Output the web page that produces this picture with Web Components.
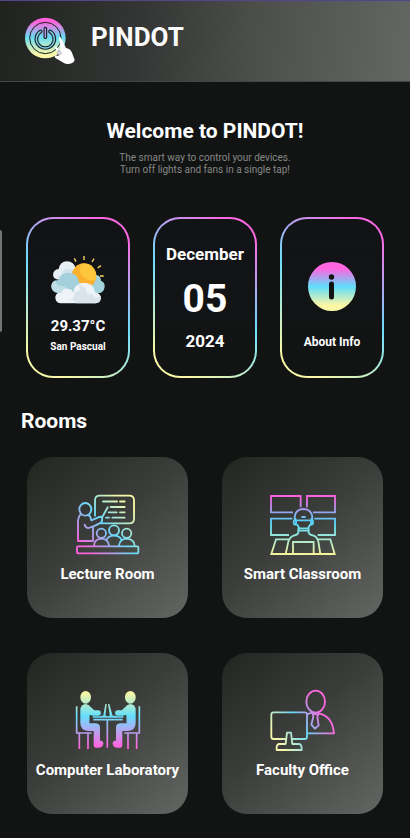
<!DOCTYPE html>
<html lang="en">
<head>
<meta charset="utf-8">
<meta name="viewport" content="width=device-width, initial-scale=1">
<title>PINDOT</title>
<style>
html { background: #121413; }
body { margin: 0; font-family: Roboto, "Liberation Sans", sans-serif; color: #fff; }
</style>
</head>
<body>
<pindot-app></pindot-app>

<template id="t-app">
<style>
:host { display: block; position: relative; min-height: 100vh; background: #121413; }
main { display: block; padding-bottom: 24px; }
.intro { text-align: center; padding: 37px 24px 0; }
h1 { margin: 0; font-size: 21px; line-height: 24px; font-weight: 700; }
.intro p { margin: 9px 0 0; font-size: 10px; line-height: 12px; color: #858786; }
.status { display: grid; grid-template-columns: repeat(3, 1fr); gap: 23px; padding: 41px 26px 0; }
h2 { margin: 31px 21px 0; font-size: 21px; line-height: 24px; font-weight: 700; }
.rooms { display: grid; grid-template-columns: repeat(2, 1fr); gap: 35px 34px; padding: 24px 27px 0; }
.thumb { position: absolute; left: 0; top: 230px; width: 2px; height: 102px; border-radius: 0 2px 2px 0; background: #747675; }
.weather { width: 56px; height: 50px; margin: 0 0 11px; }
.temp { font-size: 15px; line-height: 20px; }
.place { font-size: 10px; line-height: 14px; margin-top: 4px; }
.month, .year { font-size: 17px; line-height: 20px; }
.day { font-size: 39px; line-height: 44px; margin: 13px 0 10px; }
.info { width: 48px; height: 49px; margin-bottom: 23px; }
.about { font-size: 12px; line-height: 16px; }
.stack { display: flex; flex-direction: column; align-items: center; }
.w { padding-top: 13px; }
.i { padding-top: 16px; }
</style>
<app-header></app-header>
<main>
  <section class="intro">
    <h1>Welcome to PINDOT!</h1>
    <p>The smart way to control your devices.<br>Turn off lights and fans in a single tap!</p>
  </section>
  <section class="status">
    <status-card>
      <div class="stack w">
      <svg class="weather" viewBox="149 148 168 150" aria-hidden="true">
        <path d="M222 158l5 10M251 151v12M281 159l-6 10M302 180l-10 7M310 211h-11" stroke="#f9d866" stroke-width="4"/>
        <path d="M287 207q14 2 15 18 12 5 11 18-2 19-22 20h-40v-40z" fill="#a4d2dc"/>
        <path d="M176 222q-17-1-18-15 1-15 17-17 4-22 25-23 21 1 27 22l-6 35z" fill="#e6eff4"/>
        <path d="M188 222q-14-2-17-13 4 4 12 2 0-16 15-20 18-4 25 8l-8 22z" fill="#d2e2ea"/>
        <circle cx="251" cy="210" r="37" fill="#fbb02e"/>
        <path d="M243 174q35-5 44 29 2 14-4 22-32 0-42-23-5-16 2-28z" fill="#fdc63c"/>
        <path d="M174 263q-21-3-21-22 2-18 21-18 7-22 32-22 27 2 30 28 14 5 12 25z" fill="#a4d0dc"/>
        <path d="M171 260q-18-5-18-19 1-12 12-17 1 17 17 16 12-1 17 8l-9 14z" fill="#bedfe6"/>
        <path d="M180 293q-16-2-15-20 4-14 18-12 5-14 20-12 11 1 16 9 3-26 33-27 29 1 32 29 17 3 18 17-1 15-16 16z" fill="#edf3f6"/>
        <path d="M236 239q25 4 23 25 24-2 24 13 8-2 18-7 2 20-14 23h-60q-4-13-20-8 19-9 16-26 26-2 13-20z" fill="#d9e5eb"/>
      </svg>
      <div class="temp">29.37°C</div>
      <div class="place">San Pascual</div>
      </div>
    </status-card>
    <status-card>
      <div class="stack">
      <div class="month">December</div>
      <div class="day">05</div>
      <div class="year">2024</div>
      </div>
    </status-card>
    <status-card action>
      <div class="stack i">
      <svg class="info" viewBox="0 0 48 49" aria-hidden="true">
        <defs><linearGradient id="ig" x1="0" y1="0" x2="0" y2="1"><stop offset=".14" stop-color="#ff66df"/><stop offset=".5" stop-color="#5fdcfb"/><stop offset=".88" stop-color="#fbf7a6"/></linearGradient></defs>
        <ellipse cx="24" cy="24.5" rx="24" ry="24.5" fill="url(#ig)"/>
        <circle cx="23.5" cy="15" r="2.7" fill="#121413"/>
        <path d="M23.500 22v13" stroke="#121413" stroke-width="5" stroke-linecap="round"/>
      </svg>
      <div class="about">About Info</div>
      </div>
    </status-card>
  </section>
  <h2>Rooms</h2>
  <section class="rooms">
    <room-card name="Lecture Room">
      <svg viewBox="224 279 198 186" aria-hidden="true">
        <defs><linearGradient id="lg" gradientUnits="userSpaceOnUse" x1="250" y1="440" x2="380" y2="310"><stop offset="0" stop-color="#ff62df"/><stop offset=".5" stop-color="#67d9f8"/><stop offset="1" stop-color="#fbf7a6"/></linearGradient></defs>
        <g fill="none" stroke="url(#lg)" stroke-width="5.500" stroke-linecap="round" stroke-linejoin="round">
          <path d="M284 347V301q0-14 14-14h89q14 0 14 14v55q0 14-14 14h-84"/>
          <path d="M308 304.500h42M359 304.500h14M331 321h42M325 337h24M359 337h14M317 353h9M336 353h37M322 322l-16 29"/>
          <ellipse cx="255" cy="328" rx="18" ry="19"/>
          <path d="M240 344q-6 7-7 19v60h45v-43l24-12q5-4 3-15-4-5-11-1l-21 9q-2-13-10-17M253 374q2 11 12 10l13-5"/>
          <rect x="230" y="439" width="184" height="21" rx="3"/>
          <circle cx="303" cy="400" r="14"/><circle cx="341" cy="391" r="15"/><circle cx="379" cy="400" r="14"/>
          <path d="M281 437q1-20 22-21 21 1 23 21M318 420q6-13 23-13t23 13M356 437q2-20 23-21 22 1 24 21"/>
        </g>
      </svg>
    </room-card>
    <room-card name="Smart Classroom">
      <svg viewBox="179 129 198 186" aria-hidden="true">
        <defs><linearGradient id="sg" gradientUnits="userSpaceOnUse" x1="0" y1="142" x2="0" y2="314"><stop offset="0" stop-color="#f663df"/><stop offset=".43" stop-color="#55d3fb"/><stop offset=".6" stop-color="#7fe4e5"/><stop offset="1" stop-color="#f8f39a"/></linearGradient></defs>
        <g fill="none" stroke="url(#sg)" stroke-width="5.500" stroke-linejoin="miter">
          <path d="M248 187H182V138h89v34M290 172V138h84v49H308M246 206H182v49h54M312 206h62v49h-52"/>
          <path d="M253 211v-10q2-23 26-24 25 1 27 24v10M253 211h53M257 211v12q-8 3-7-9l7-10M302 211v12q7 3 6-9l-6-10M260 223l7 12h26l7-12M264 235v13q-2 6-14 9-12 4-16 18l-8 37M295 235v13q2 6 15 9 11 4 14 18l6 37M265 242h30M236 268h-39l-14 44h190l-13-44h-37M248 312v-36h62v36"/>
          <path d="M273 201h13" stroke-width="6"/>
        </g>
      </svg>
    </room-card>
    <room-card name="Computer Laboratory">
      <svg viewBox="223 135 198 186" aria-hidden="true">
        <defs><linearGradient id="cg" gradientUnits="userSpaceOnUse" x1="0" y1="147" x2="0" y2="306"><stop offset="0" stop-color="#faf7a4"/><stop offset=".43" stop-color="#64dffb"/><stop offset=".62" stop-color="#9abaf5"/><stop offset="1" stop-color="#ff65df"/></linearGradient></defs>
        <g fill="url(#cg)">
          <ellipse cx="255" cy="160" rx="16" ry="19"/>
          <path d="M239 194q3-13 16-14 10 1 15 9l11 10h13q7 1 7 8t-7 8h-17l-10-3-1 26h20q12 1 12 13v39h3q8 1 7 10-2 11-14 11h-10q-5-1-5-8v-42h-17q-23-2-23-24z"/>
          <ellipse cx="389" cy="160" rx="16" ry="19"/>
          <path d="M405 194q-3-13-16-14-10 1-15 9l-11 10h-13q-7 1-7 8t7 8h17l10-3 1 26h-20q-12 1-12 13v39h-3q-8 1-7 10 2 11 14 11h10q5-1 5-8v-42h17q23-2 23-24z"/>
          <path d="M307 219l7-39h4l-4 39zM337 219l-11-39h-4l6 39z"/>
        </g>
        <path fill="none" stroke="url(#cg)" stroke-width="5" d="M228 187v80h45M236 268v47M262 268v47M416 187v80h-45M408 268v47M382 268v47M276 219h92M278 227h88M320 227v84M299 218h20M325 218h23"/>
      </svg>
    </room-card>
    <room-card name="Faculty Office">
      <svg viewBox="181 129 198 186" aria-hidden="true">
        <defs><linearGradient id="fg" gradientUnits="userSpaceOnUse" x1="205" y1="285" x2="335" y2="200"><stop offset="0" stop-color="#f8f6ac"/><stop offset=".54" stop-color="#67d7f8"/><stop offset="1" stop-color="#fb68df"/></linearGradient></defs>
        <g fill="none" stroke="url(#fg)" stroke-width="5.500" stroke-linejoin="round">
          <path d="M230 279h-38q-7 0-7-7v-66q0-7 7-7h93q7 0 7 7v66q0 7-7 7h-38"/>
          <path d="M232 260h12l4 34h21q8 2 7 18h-75q-2-16 7-18h20z"/>
          <ellipse cx="318" cy="167" rx="28" ry="33"/>
          <path d="M292 206q9-7 19-5M326 202q42 7 47 60h-80"/>
          <path d="M309 202q8 5 18 1l-4 10 4 25-11 10-11-12 6-24z"/>
        </g>
      </svg>
    </room-card>
  </section>
</main>
<div class="thumb"></div>
</template>

<template id="t-header">
<style>
:host { display: block; }
header { box-sizing: border-box; height: 82px; display: flex; align-items: flex-start; gap: 15px; padding: 15px 24px 0; border-top: 1px solid #52458a; border-bottom: 1px solid #454746; background: linear-gradient(97deg, #20221e 0%, #343635 34%, #4b4d49 60%, #636864 100%); }
svg { width: 52px; height: 50px; flex: none; }
.name { font-size: 26px; line-height: 30px; font-weight: 700; padding-top: 6px; color: #fafbf8; }
</style>
<header>
  <svg viewBox="72 48 156 150" aria-hidden="true">
    <defs><linearGradient id="hg" x1="0" y1="0" x2="0" y2="1"><stop offset=".1" stop-color="#ff62d9"/><stop offset=".48" stop-color="#66dcf4"/><stop offset=".9" stop-color="#fbf7a6"/></linearGradient></defs>
    <circle cx="136" cy="114" r="61" fill="url(#hg)"/>
    <circle cx="136" cy="114" r="47" fill="none" stroke="#1c2024" stroke-width="3"/>
    <path d="M122 94a27 27 0 1 0 28 0" fill="none" stroke="#1c2024" stroke-width="11" stroke-linecap="round"/>
    <path d="M122 94a27 27 0 1 0 28 0" fill="none" stroke="#78cfe8" stroke-width="4" stroke-linecap="round"/>
    <path d="M136 86v26" stroke="#1c2024" stroke-width="11" stroke-linecap="round"/>
    <path d="M136 86v26" stroke="#b3a0ee" stroke-width="4" stroke-linecap="round"/>
    <path d="M177 111q5-1 8 7l13 26q12 2 17 12l9 23q-2 10-15 12-9 3-17-2l-26-15q-4-4 0-8l10 2-3-10-9-16 4-3 14 13z" fill="#fff"/>
    <path d="M176 150q-6 8-1 15 8 0 9-7z" fill="#e2e2ea" stroke="#8b8a9c" stroke-width="2"/>
  </svg>
  <div class="name">PINDOT</div>
</header>
</template>

<template id="t-status">
<style>
:host { display: block; min-width: 0; }
.box { box-sizing: border-box; width: 100%; min-height: 161px; margin: 0; padding: 0; display: flex; flex-direction: column; align-items: center; justify-content: center; border: 2px solid transparent; border-radius: 27px; color: #fff; font: 700 12px Roboto, "Liberation Sans", sans-serif;
  background: linear-gradient(#121317, #121413) padding-box, linear-gradient(214deg, #fb69e2 10%, #6ddcfb 49%, #f8f8a8 88%) border-box; }
button { cursor: pointer; }
</style>
</template>

<template id="t-room">
<style>
:host { display: block; min-width: 0; }
button { box-sizing: border-box; width: 100%; min-height: 161px; margin: 0; padding: 36px 0 0; border: 0; border-radius: 25px; display: flex; flex-direction: column; align-items: center; gap: 10px; cursor: pointer; color: #fff; font: 700 15px/18px Roboto, "Liberation Sans", sans-serif; white-space: nowrap;
  background: linear-gradient(140deg, #232521 0%, #3b3d3a 45%, #646664 100%); }
::slotted(svg) { width: 66px; height: 62px; display: block; }
</style>
<button type="button"><slot></slot><span></span></button>
</template>

<script>
const tpl = id => document.getElementById(id).content.cloneNode(true);

class AppHeader extends HTMLElement {
  constructor() { super(); this.attachShadow({ mode: "open" }).append(tpl("t-header")); }
}
class StatusCard extends HTMLElement {
  connectedCallback() {
    if (this.shadowRoot) return;
    const root = this.attachShadow({ mode: "open" });
    root.append(tpl("t-status"));
    const box = document.createElement(this.hasAttribute("action") ? "button" : "div");
    if (box.tagName === "BUTTON") box.type = "button";
    box.className = "box";
    box.append(document.createElement("slot"));
    root.append(box);
  }
}
class RoomCard extends HTMLElement {
  connectedCallback() {
    if (this.shadowRoot) return;
    const root = this.attachShadow({ mode: "open" });
    root.append(tpl("t-room"));
    root.querySelector("span").textContent = this.getAttribute("name");
  }
}
class PindotApp extends HTMLElement {
  constructor() { super(); this.attachShadow({ mode: "open" }).append(tpl("t-app")); }
}
customElements.define("app-header", AppHeader);
customElements.define("status-card", StatusCard);
customElements.define("room-card", RoomCard);
customElements.define("pindot-app", PindotApp);
</script>
</body>
</html>
